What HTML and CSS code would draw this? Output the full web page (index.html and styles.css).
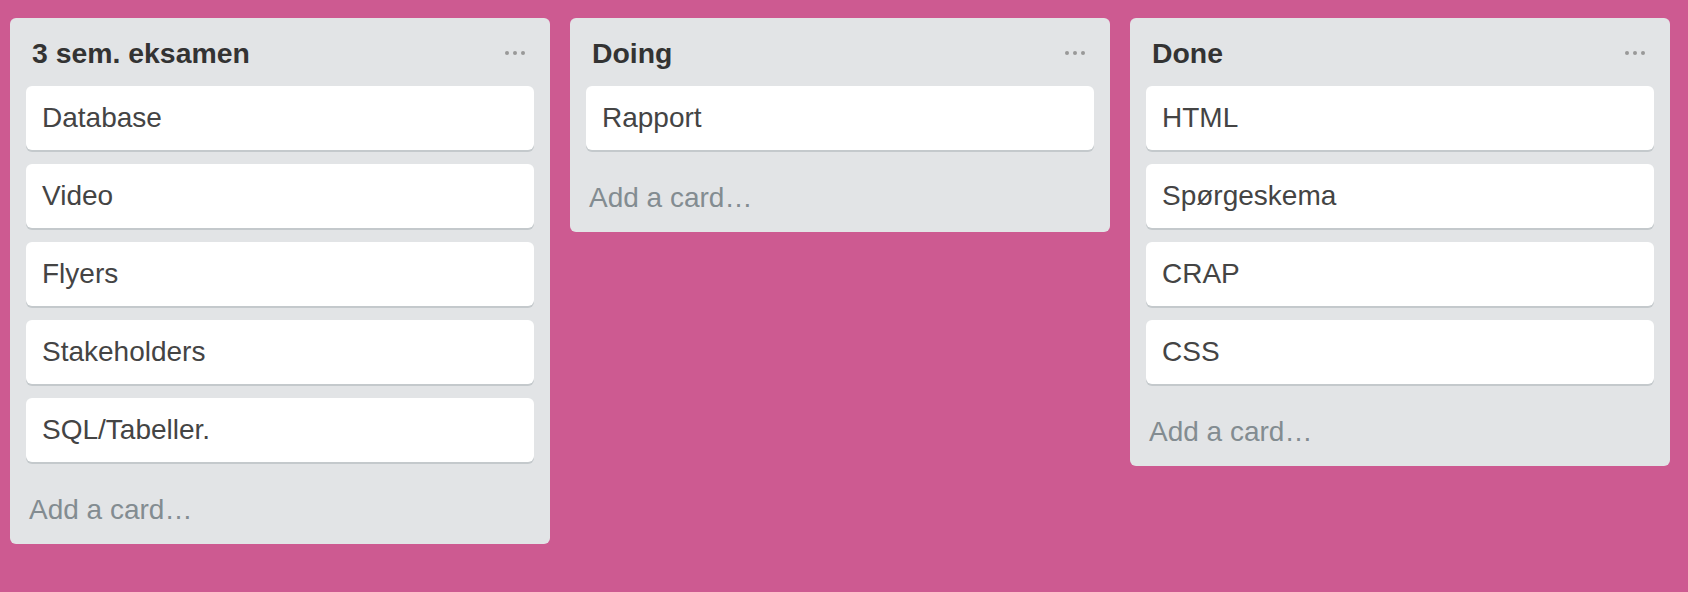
FILE: index.html
```html
<!DOCTYPE html>
<html lang="da">
<head>
<meta charset="utf-8">
<title>Board</title>
<link rel="stylesheet" href="styles.css">
</head>
<body>
<div class="board">
  <div class="list">
    <div class="list-header">
      <h2 class="list-title">3 sem. eksamen</h2>
      <svg class="list-menu" width="20" height="4" viewBox="0 0 20 4"><circle cx="2" cy="2" r="2"/><circle cx="10" cy="2" r="2"/><circle cx="18" cy="2" r="2"/></svg>
    </div>
    <div class="card">Database</div>
    <div class="card">Video</div>
    <div class="card">Flyers</div>
    <div class="card">Stakeholders</div>
    <div class="card">SQL/Tabeller.</div>
    <div class="add-card">Add a card…</div>
  </div>
  <div class="list">
    <div class="list-header">
      <h2 class="list-title">Doing</h2>
      <svg class="list-menu" width="20" height="4" viewBox="0 0 20 4"><circle cx="2" cy="2" r="2"/><circle cx="10" cy="2" r="2"/><circle cx="18" cy="2" r="2"/></svg>
    </div>
    <div class="card">Rapport</div>
    <div class="add-card">Add a card…</div>
  </div>
  <div class="list">
    <div class="list-header">
      <h2 class="list-title">Done</h2>
      <svg class="list-menu" width="20" height="4" viewBox="0 0 20 4"><circle cx="2" cy="2" r="2"/><circle cx="10" cy="2" r="2"/><circle cx="18" cy="2" r="2"/></svg>
    </div>
    <div class="card">HTML</div>
    <div class="card">Spørgeskema</div>
    <div class="card">CRAP</div>
    <div class="card">CSS</div>
    <div class="add-card">Add a card…</div>
  </div>
</div>
</body>
</html>
```
FILE: styles.css
```css
html, body {
  margin: 0;
  padding: 0;
  background: #cd5a91;
  font-family: "Liberation Sans", Arial, Helvetica, sans-serif;
}

.board {
  display: flex;
  align-items: flex-start;
  gap: 20px;
  padding: 18px 0 0 10px;
}

.list {
  width: 540px;
  box-sizing: border-box;
  background: #e2e4e6;
  border-radius: 6px;
  padding: 0 16px;
}

.list-header {
  display: flex;
  align-items: center;
  justify-content: space-between;
  padding: 15px 9px 0 6px;
  margin-bottom: 13px;
}

.list-title {
  margin: 0;
  font-size: 28.4px;
  line-height: 40px;
  font-weight: bold;
  color: #333333;
}

.list-menu {
  fill: #999999;
  margin-top: -1px;
}

.card {
  background: #ffffff;
  border-radius: 6px;
  box-shadow: 0 2px 0 #c4c9cc;
  padding: 12px 16px;
  margin-bottom: 14px;
  font-size: 28px;
  line-height: 40px;
  color: #444444;
}

.add-card {
  padding: 14px 3px;
  font-size: 28px;
  line-height: 40px;
  color: #838c91;
}
```
